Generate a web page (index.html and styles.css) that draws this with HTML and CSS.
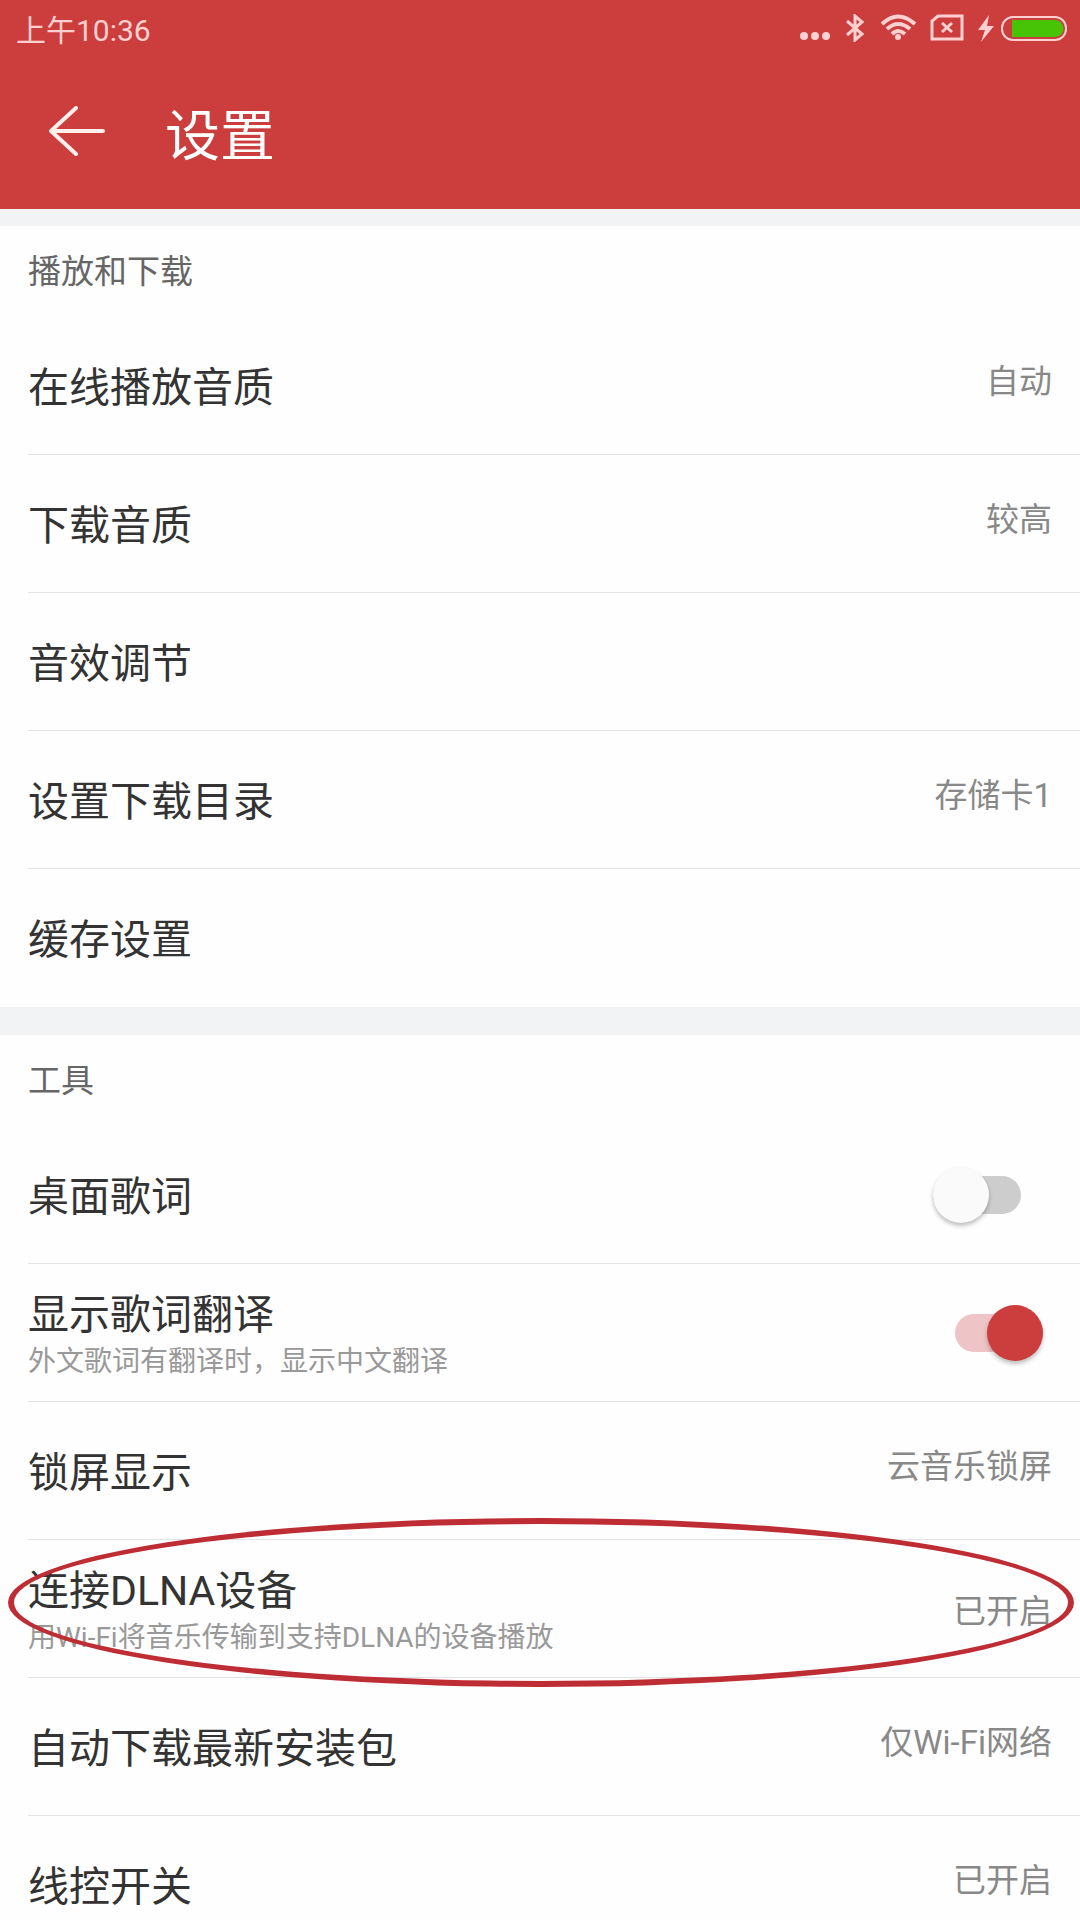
FILE: index.html
```html
<!DOCTYPE html>
<html lang="zh-CN">
<head>
    <meta charset="UTF-8">
    <meta name="viewport" content="width=device-width, initial-scale=1.0">
    <title>设置</title>
    <link rel="stylesheet" href="styles.css">
</head>
<body>
    <header>
        <div class="status-bar">
            <span class="time">上午10:36</span>
            <svg class="status-icons" width="270" height="28" viewBox="0 0 270 28" fill="none" stroke="#ffd0d0" stroke-width="2">
                <g fill="#ffd0d0" stroke="none">
                    <circle cx="4" cy="22" r="4"/>
                    <circle cx="15" cy="22" r="4"/>
                    <circle cx="26" cy="22" r="4"/>
                    <circle cx="98" cy="23" r="3"/>
                    <path d="M189 1L178 16H185L181 28L194 12H187Z"/>
                </g>
                <path d="M47 7L62 20L55 26V2L62 8L47 21" stroke-width="3"/>
                <path d="M82 10Q98 -5 115 10M87 15Q98 5 110 15M92 20Q98 14 105 20" stroke-width="4"/>
                <path d="M138 2H162V25H132V7Z" stroke-width="3"/>
                <path d="M142 9L152 18M152 9L142 18" stroke-width="3"/>
                <rect x="202" y="3" width="64" height="23" rx="11" ry="11"/>
                <path d="M212 6H255A8 8 0 0 1 255 23H212Z" fill="#47c405" stroke="none"/>
            </svg>
        </div>
        <div class="title-bar">
            <button class="back" type="button" aria-label="返回">
                <svg width="56" height="50" viewBox="0 0 56 50" fill="none" stroke="#fff0ee" stroke-width="4" stroke-linecap="round" stroke-linejoin="round">
                    <path d="M27 2L2 25L27 48M2 25H54"/>
                </svg>
            </button>
            <h1>设置</h1>
        </div>
    </header>

    <section>
        <h2>播放和下载</h2>
        <ul>
            <li><a class="row" href="#"><span class="name">在线播放音质</span><span class="value">自动</span></a></li>
            <li><a class="row" href="#"><span class="name">下载音质</span><span class="value">较高</span></a></li>
            <li><a class="row" href="#"><span class="name">音效调节</span></a></li>
            <li><a class="row" href="#"><span class="name">设置下载目录</span><span class="value">存储卡1</span></a></li>
            <li><a class="row" href="#"><span class="name">缓存设置</span></a></li>
        </ul>
    </section>

    <section>
        <h2>工具</h2>
        <ul>
            <li>
                <label class="row" for="desktop-lyric">
                    <span class="name">桌面歌词</span>
                    <input class="switch" type="checkbox" id="desktop-lyric">
                </label>
            </li>
            <li>
                <label class="row two-line" for="lyric-translate">
                    <span class="text">
                        <span class="name">显示歌词翻译</span>
                        <span class="note">外文歌词有翻译时，显示中文翻译</span>
                    </span>
                    <input class="switch" type="checkbox" id="lyric-translate" checked>
                </label>
            </li>
            <li><a class="row" href="#"><span class="name">锁屏显示</span><span class="value">云音乐锁屏</span></a></li>
            <li class="marked">
                <a class="row two-line" href="#">
                    <span class="text">
                        <span class="name">连接DLNA设备</span>
                        <span class="note">用Wi-Fi将音乐传输到支持DLNA的设备播放</span>
                    </span>
                    <span class="value">已开启</span>
                </a>
            </li>
            <li><a class="row" href="#"><span class="name">自动下载最新安装包</span><span class="value">仅Wi-Fi网络</span></a></li>
            <li><a class="row" href="#"><span class="name">线控开关</span><span class="value">已开启</span></a></li>
        </ul>
    </section>
</body>
</html>
```
FILE: styles.css
```css
* {
    box-sizing: border-box;
}

html {
    overflow: hidden;
}

body {
    margin: 0;
    background-color: #f2f3f5;
    color: #333;
    font-family: Roboto, "Noto Sans CJK SC", sans-serif;
}

header {
    margin-bottom: 17px;
    background-color: #cc3d3d;
    color: #fff;
}

.status-bar {
    display: flex;
    align-items: center;
    justify-content: space-between;
    height: 56px;
    padding: 0 10px 0 16px;
}

.time {
    color: #ffd0d0;
    font-size: 30px;
}

.title-bar {
    display: flex;
    align-items: center;
    gap: 60px;
    height: 153px;
    padding: 0 49px 4px;
}

.back {
    display: flex;
    padding: 0;
    border: none;
    background: none;
    cursor: pointer;
}

h1 {
    margin: 0;
    font-size: 55px;
    font-weight: 400;
}

section {
    margin-bottom: 28px;
    background-color: #fefefe;
}

h2 {
    margin: 0;
    padding: 0 28px;
    color: #666;
    font-size: 33px;
    font-weight: 400;
    line-height: 91px;
}

ul {
    margin: 0;
    padding: 0;
    list-style: none;
}

li {
    padding-left: 28px;
}

.row {
    display: flex;
    align-items: center;
    justify-content: space-between;
    height: 138px;
    padding-right: 28px;
    border-bottom: 1px solid #e2e3e4;
    color: #333;
    text-decoration: none;
}

li:last-child .row {
    border-bottom: none;
}

.row > .name,
.text {
    padding-top: 4px;
}

.text {
    display: flex;
    flex-direction: column;
}

.name {
    font-size: 41px;
    line-height: 54px;
}

.note {
    color: #999;
    font-size: 28px;
    line-height: 40px;
}

.value {
    padding-bottom: 14px;
    color: #888;
    font-size: 33px;
}

.two-line .value {
    padding-bottom: 0;
}

/* switch, the knob is taller than the track */
.switch {
    appearance: none;
    display: flex;
    align-items: center;
    width: 88px;
    height: 38px;
    margin: 0 31px 0 0;
    border-radius: 19px;
    background-color: #cdcdcd;
    cursor: pointer;
}

.switch::before {
    content: "";
    flex: none;
    width: 56px;
    height: 56px;
    border-radius: 50%;
    background-color: #fafafa;
    box-shadow: 0 3px 4px rgba(0, 0, 0, 0.25);
}

.switch:checked {
    justify-content: flex-end;
    margin-right: 9px;
    background-color: #efc4c6;
}

.switch:checked::before {
    background-color: #cc3d3d;
}

/* red ring around the DLNA row */
.marked {
    position: relative;
}

.marked::after {
    content: "";
    position: absolute;
    top: -22px;
    right: 6px;
    bottom: -9px;
    left: 8px;
    border: 6px solid #be2c34;
    border-radius: 50%;
    pointer-events: none;
}
```
